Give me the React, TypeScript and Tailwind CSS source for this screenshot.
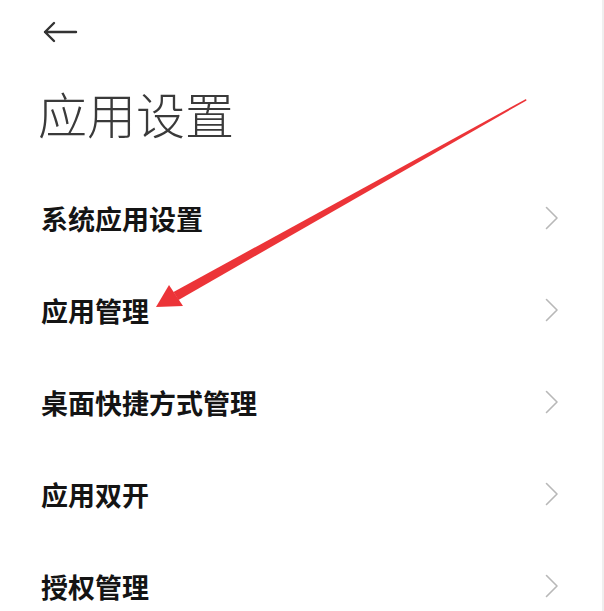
const items = ['系统应用设置', '应用管理', '桌面快捷方式管理', '应用双开', '授权管理'];

function Chevron() {
  return (
    <svg width="14" height="24" viewBox="0 0 14 24" fill="none">
      <polyline points="1.5,1.5 12,12 1.5,22.5" stroke="#b8b8b8" strokeWidth="1.6" strokeLinecap="round" strokeLinejoin="round" />
    </svg>
  );
}

export default function App() {
  return (
    <div className="relative h-[611px] w-[604px] overflow-hidden border-r-2 border-[#efefef] bg-white font-['Noto_Sans_CJK_SC',sans-serif]">
      <div className="pl-[42px] pt-[21px]">
        <svg width="36" height="22" viewBox="0 0 36 22" fill="none">
          <path d="M34 11H3M12 2L3 11L12 20" stroke="#333" strokeWidth="2.4" strokeLinecap="round" strokeLinejoin="round" />
        </svg>
      </div>
      <h1 className="mt-[42px] pl-[38px] text-[49px] font-light leading-[56px] text-[#3a3a3a]">应用设置</h1>
      <ul className="mt-[31px]">
        {items.map((label) => (
          <li key={label} className="flex h-[92px] items-center justify-between pl-[41px] pr-[43px]">
            <span className="text-[27px] font-bold leading-none text-[#141414]">{label}</span>
            <Chevron />
          </li>
        ))}
      </ul>

      <svg className="pointer-events-none absolute left-0 top-0" width="604" height="611" viewBox="0 0 604 611">
        <polygon points="173.5,292 526,99 526.5,100.5 178.5,300" fill="#ec3438" />
        <polygon points="156,307 169,285 183,306" fill="#ec3438" />
      </svg>
    </div>
  );
}
